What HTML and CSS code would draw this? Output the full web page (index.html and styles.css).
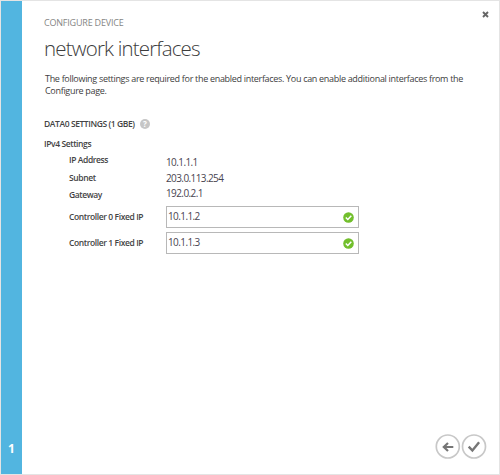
FILE: index.html
```
<!DOCTYPE html>
<html lang="en">
<head>
<meta charset="utf-8">
<title>Configure Device</title>
<link rel="stylesheet" href="styles.css">
</head>
<body>
<div class="dialog">
  <aside class="rail"><span class="step">1</span></aside>
  <main class="content">
    <button class="close" aria-label="Close">
      <svg width="7" height="7" viewBox="0 0 7 7"><path d="M1 1l5 5M6 1L1 6" stroke="#666" stroke-width="1.9"/></svg>
    </button>
    <div class="eyebrow">CONFIGURE DEVICE</div>
    <h1 class="title">network interfaces</h1>
    <p class="intro">The following settings are required for the enabled interfaces. You can enable additional interfaces from the<br>Configure page.</p>
    <h2 class="section"><span>DATA0 SETTINGS (1 GBE)</span><span class="help">?</span></h2>
    <h3 class="group">IPv4 Settings</h3>
    <div class="fields">
      <div class="row address"><span class="label">IP Address</span><span class="value">10.1.1.1</span></div>
      <div class="row subnet"><span class="label">Subnet</span><span class="value">203.0.113.254</span></div>
      <div class="row gateway"><span class="label">Gateway</span><span class="value">192.0.2.1</span></div>
      <div class="row entry"><span class="label">Controller 0 Fixed IP</span>
        <div class="box"><span class="value">10.1.1.2</span><svg width="11" height="11" viewBox="0 0 11 11"><circle cx="5.5" cy="5.5" r="5.3" fill="#72bf2c"/><path d="M2.8 5.5l2 2 3.5-3.8" fill="none" stroke="#fff" stroke-width="1.5"/></svg></div></div>
      <div class="row entry"><span class="label">Controller 1 Fixed IP</span>
        <div class="box"><span class="value">10.1.1.3</span><svg width="11" height="11" viewBox="0 0 11 11"><circle cx="5.5" cy="5.5" r="5.3" fill="#72bf2c"/><path d="M2.8 5.5l2 2 3.5-3.8" fill="none" stroke="#fff" stroke-width="1.5"/></svg></div></div>
    </div>
    <div class="actions">
      <svg width="26" height="26" viewBox="0 0 26 26"><circle cx="12.8" cy="12.5" r="11.5" fill="#fff" stroke="#c8c8c8" stroke-width="1.7"/><path d="M18.3 13H9M13 9l-4.2 4 4.2 4" fill="none" stroke="#767676" stroke-width="2.2"/></svg>
      <svg width="26" height="26" viewBox="0 0 26 26"><circle cx="13" cy="12.5" r="11.5" fill="#fff" stroke="#c8c8c8" stroke-width="1.7"/><path d="M7.7 12.7l3.7 3.8 6.7-8.2" fill="none" stroke="#767676" stroke-width="2.4"/></svg>
    </div>
  </main>
</div>
</body>
</html>
```
FILE: styles.css
```
* { box-sizing: border-box; }
body { margin: 0; font-family: "Open Sans", "Noto Sans", sans-serif; color: #555; background: #fff; }
.dialog { display: flex; width: 500px; height: 475px; border: 1px solid #e4e4e4; }
.rail { flex: 0 0 21px; background: #52b5e0; display: flex; align-items: flex-end; justify-content: center; padding-bottom: 17px; }
.step { color: #fff; font-size: 12px; line-height: 16px; font-weight: 700; }
.content { position: relative; flex: 1; min-width: 0; display: flex; flex-direction: column; padding-left: 22px; }
.close { position: absolute; top: 10px; right: 10px; width: 7px; height: 7px; padding: 0; border: 0; background: none; display: flex; }
.eyebrow { margin-top: 15px; height: 14px; font-size: 9px; line-height: 14px; color: #858585; white-space: nowrap; letter-spacing: -0.2px; }
.title { margin: 4px 0 0; height: 28px; font-size: 20.5px; line-height: 28px; font-weight: 300; letter-spacing: -0.83px; color: #3c3c3c; }
.intro { margin: 11px 0 0; padding-left: 1px; font-size: 9px; line-height: 12px; height: 24px; white-space: nowrap; letter-spacing: -0.31px; color: #404040; }
.section { margin: 20px 0 0; height: 14px; display: flex; align-items: center; gap: 5px; font-size: 8.5px; line-height: 14px; font-weight: 600; letter-spacing: -0.41px; color: #444; }
.help { width: 10px; height: 10px; border-radius: 50%; background: #c6c6c6; color: #fff; font-size: 8px; line-height: 10px; text-align: center; font-weight: 700; }
.group { margin: 6px 0 0; height: 14px; font-size: 8.5px; line-height: 14px; font-weight: 600; letter-spacing: -0.4px; color: #444; }
.fields { padding-left: 24px; display: flex; flex-direction: column; }
.row { display: flex; }
.label { width: 98px; padding-left: 1px; font-size: 8.5px; line-height: 14px; font-weight: 600; letter-spacing: -0.4px; color: #444; white-space: nowrap; }
.value { font-size: 10px; line-height: 14px; color: #484450; letter-spacing: -0.6px; }
.address { margin-top: 2px; height: 18px; }
.address .value { padding-top: 2px; }
.subnet { height: 17px; }
.gateway { height: 18px; }
.gateway .value { margin-top: -2px; }
.entry { height: 22px; align-items: center; }
.entry + .entry { margin-top: 4px; }
.box { width: 193px; height: 22px; display: flex; justify-content: space-between; align-items: center; padding: 0 4px 0 1px; border: 1px solid #b8b8b8; }
.box .value { margin-top: -3px; }
.actions { margin-top: auto; display: flex; justify-content: flex-end; padding: 0 12px 14px 0; }
```
